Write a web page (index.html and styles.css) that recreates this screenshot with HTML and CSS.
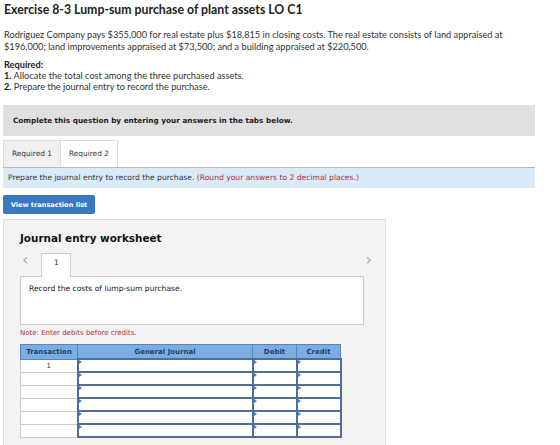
FILE: index.html
```html
<!DOCTYPE html>
<html lang="en">
<head>
    <meta charset="UTF-8">
    <title>Exercise 8-3</title>
    <link rel="stylesheet" href="styles.css">
</head>
<body>
    <div class="page">
        <h1>Exercise 8-3 Lump-sum purchase of plant assets LO C1</h1>
        <p class="intro">Rodriguez Company pays $355,000 for real estate plus $18,815 in closing costs. The real estate consists of land appraised at $196,000; land improvements appraised at $73,500; and a building appraised at $220,500.</p>
        <div class="required">
            <b>Required:</b><br>
            <b>1.</b> Allocate the total cost among the three purchased assets.<br>
            <b>2.</b> Prepare the journal entry to record the purchase.
        </div>

        <div class="banner">Complete this question by entering your answers in the tabs below.</div>

        <div class="tabs">
            <div class="tab">Required 1</div>
            <div class="tab active">Required 2</div>
        </div>
        <div class="instruction">Prepare the journal entry to record the purchase. <span class="red">(Round your answers to 2 decimal places.)</span></div>

        <button class="btn">View transaction list</button>

        <div class="worksheet">
            <h2>Journal entry worksheet</h2>
            <div class="ws-nav">
                <span class="arrow left">&lsaquo;</span>
                <div class="ws-tab">1</div>
                <span class="arrow right">&rsaquo;</span>
            </div>
            <div class="ws-box">Record the costs of lump-sum purchase.</div>
            <div class="note">Note: Enter debits before credits.</div>

            <table class="journal">
                <thead>
                    <tr>
                        <th class="c-tr">Transaction</th>
                        <th class="c-gj">General Journal</th>
                        <th class="c-amt">Debit</th>
                        <th class="c-amt">Credit</th>
                    </tr>
                </thead>
                <tbody>
                    <tr><td class="tr">1</td><td class="in"></td><td class="in"></td><td class="in"></td></tr>
                    <tr><td class="tr"></td><td class="in"></td><td class="in"></td><td class="in"></td></tr>
                    <tr><td class="tr"></td><td class="in"></td><td class="in"></td><td class="in"></td></tr>
                    <tr><td class="tr"></td><td class="in"></td><td class="in"></td><td class="in"></td></tr>
                    <tr><td class="tr"></td><td class="in"></td><td class="in"></td><td class="in"></td></tr>
                    <tr><td class="tr"></td><td class="in"></td><td class="in"></td><td class="in"></td></tr>
                </tbody>
            </table>
        </div>
    </div>
</body>
</html>
```

FILE: styles.css
```css
body {
    margin: 0;
    background-color: white;
    font-family: "Lato", "Liberation Sans", sans-serif;
    color: #333;
}
.page {
    padding: 2px 25px 0 3px;
    overflow: hidden;
    height: 443px;
}
h1 {
    font-size: 12.3px;
    font-weight: bold;
    color: #222;
    margin: 0 0 0 1px;
    line-height: 16px;
}
.intro {
    font-size: 9.2px;
    line-height: 12px;
    margin: 11px 0 0 1px;
    width: 505px;
}
.required {
    font-size: 9.2px;
    line-height: 11px;
    margin: 6px 0 0 1px;
}
.required b {
    color: #222;
}
.banner {
    margin-top: 13px;
    background-color: #e0e0e0;
    height: 31px;
    line-height: 31px;
    padding-left: 10px;
    font-family: "DejaVu Sans", Verdana, sans-serif;
    font-size: 7.3px;
    font-weight: bold;
    color: #222;
    width: 522px;
}
.tabs {
    display: flex;
    margin-top: 4px;
}
.tab {
    font-family: "DejaVu Sans", Verdana, sans-serif;
    font-size: 7.4px;
    color: #333;
    background-color: #f0f0f0;
    border: 1px solid #ddd;
    border-bottom: none;
    height: 26px;
    line-height: 26px;
    padding: 0 8px;
}
.tab.active {
    background-color: white;
    border-left: none;
    position: relative;
    top: 1px;
    margin-top: -1px;
}
.instruction {
    font-family: "DejaVu Sans", Verdana, sans-serif;
    font-size: 7.6px;
    color: #333;
    background-color: #dbeaf7;
    border-top: 1px solid #bbb;
    height: 20px;
    line-height: 20px;
    padding-left: 5px;
    width: 527px;
}
.red {
    color: #a83232;
}
.btn {
    display: block;
    margin-top: 7px;
    background-color: #3b78c2;
    color: white;
    border: none;
    border-radius: 2px;
    font-family: "DejaVu Sans", Verdana, sans-serif;
    font-size: 6.6px;
    font-weight: bold;
    height: 19px;
    width: 92px;
    padding: 0;
}
.worksheet {
    margin-top: 5px;
    width: 381px;
    background-color: #f3f3f3;
    border: 1px solid #ddd;
    padding: 0 0 20px 0;
    font-family: "DejaVu Sans", Verdana, sans-serif;
}
.worksheet h2 {
    font-size: 10.4px;
    font-weight: bold;
    color: #111;
    margin: 12px 0 0 16px;
    line-height: 12px;
}
.ws-nav {
    display: flex;
    align-items: flex-end;
    margin: 8px 0 0 16px;
    width: 344px;
    height: 24px;
}
.arrow {
    font-size: 16px;
    color: #aaa;
    line-height: 16px;
    align-self: flex-start;
}
.arrow.left {
    margin: 0 13px 0 2px;
}
.arrow.right {
    margin-left: auto;
    position: relative;
    left: 8px;
}
.ws-tab {
    width: 28px;
    height: 23px;
    background-color: white;
    border: 1px solid #ccc;
    border-bottom: none;
    font-size: 7.4px;
    color: #222;
    text-align: center;
    line-height: 18px;
    position: relative;
    top: 1px;
}
.ws-box {
    margin-left: 16px;
    height: 40px;
    background-color: white;
    border: 1px solid #ccc;
    font-size: 7.6px;
    color: #222;
    padding: 7px 0 0 8px;
    width: 334px;
}
.note {
    font-size: 7px;
    color: #a83232;
    margin: 4px 0 0 16px;
}
.journal {
    margin: 7px 0 0 16px;
    border-collapse: collapse;
    font-size: 7px;
}
.journal th {
    background-color: #7aaee3;
    color: #1e3d66;
    font-weight: bold;
    height: 13px;
    padding: 0;
    border: 1px solid #5a86b8;
}
.c-tr { width: 56px; }
.c-gj { width: 174px; }
.c-amt { width: 43px; }
.journal td {
    height: 11px;
    padding: 0;
    background-color: white;
}
.journal td.tr {
    border: 1px solid #ccc;
    text-align: center;
    color: #333;
}
.journal td.in {
    border: 2px solid #4f6f99;
    position: relative;
}
.journal td.in::before {
    content: "";
    position: absolute;
    left: 0;
    top: 0;
    border-top: 2px solid transparent;
    border-bottom: 2px solid transparent;
    border-left: 3px solid #3d7fd0;
}
```
